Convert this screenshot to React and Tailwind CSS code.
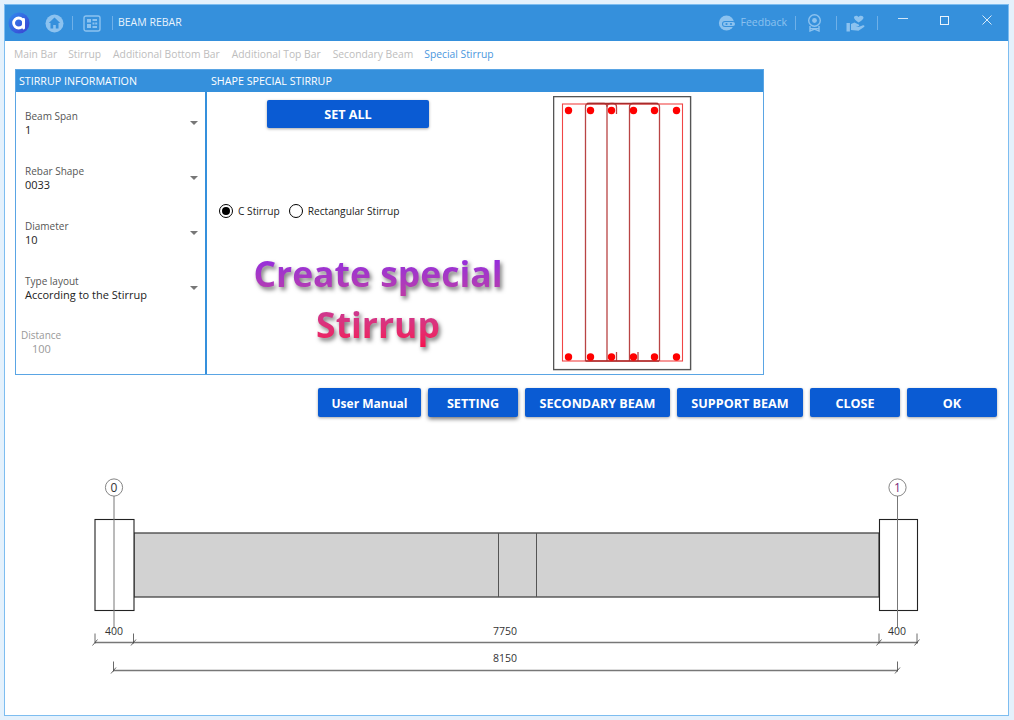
import React from "react";

const font = { fontFamily: '"Open Sans", "Noto Sans", sans-serif' };

function Sep() {
  return <div className="w-px h-[14px] bg-[#6fb0e8]" />;
}

function Logo() {
  return (
    <svg width="22" height="22" viewBox="0 0 22 22">
      <defs>
        <linearGradient id="lg" x1="0" y1="0" x2="1" y2="1">
          <stop offset="0" stopColor="#2f8cf0" />
          <stop offset="1" stopColor="#3b3fd0" />
        </linearGradient>
      </defs>
      <circle cx="11" cy="11" r="10.5" fill="url(#lg)" />
      <circle cx="10.6" cy="11" r="5" fill="none" stroke="#fff" strokeWidth="2.8" />
      <path d="M15.6 7.5 V16" stroke="#fff" strokeWidth="2.8" fill="none" strokeLinecap="round" />
    </svg>
  );
}

function HomeIcon() {
  return (
    <svg width="19" height="19" viewBox="0 0 19 19">
      <circle cx="9.5" cy="9.5" r="9" fill="#8cc2ef" />
      <path d="M9.5 3.6 L15.2 9 H13.5 V14.6 H10.8 V11 H8.2 V14.6 H5.5 V9 H3.8 Z" fill="#3590dc" />
    </svg>
  );
}

function PanelIcon() {
  return (
    <svg width="18" height="17" viewBox="0 0 18 17" fill="none">
      <rect x="1" y="1" width="16" height="15" rx="2" stroke="#8cc2ef" strokeWidth="1.4" />
      <rect x="4" y="4" width="4" height="3.5" fill="#8cc2ef" />
      <rect x="4" y="9" width="4" height="4" fill="#8cc2ef" />
      <rect x="9.5" y="4" width="4.5" height="2" fill="#8cc2ef" />
      <rect x="9.5" y="7.5" width="2" height="2" fill="#8cc2ef" />
      <rect x="12.2" y="7.5" width="2" height="2" fill="#8cc2ef" />
      <rect x="9.5" y="11" width="4.5" height="2" fill="#8cc2ef" />
    </svg>
  );
}

function FeedbackIcon() {
  return (
    <svg width="18" height="16" viewBox="0 0 18 16">
      <circle cx="8.5" cy="8" r="7.6" fill="#8cc2ef" />
      <rect x="4" y="6" width="13.5" height="6" rx="3" fill="#3590dc" />
      <rect x="5" y="7" width="12" height="4" rx="2" fill="#8cc2ef" />
      <circle cx="8.5" cy="9" r="1.1" fill="#3590dc" />
      <circle cx="13" cy="9" r="1.1" fill="#3590dc" />
    </svg>
  );
}

function AwardIcon() {
  return (
    <svg width="15" height="18" viewBox="0 0 15 18" fill="none" stroke="#8cc2ef">
      <circle cx="7.5" cy="6.5" r="5.8" strokeWidth="1.4" />
      <circle cx="7.5" cy="6.5" r="2.4" fill="#8cc2ef" stroke="none" />
      <path d="M3 12 V17 L7.5 15 L12 17 V12" strokeWidth="1.4" />
      <path d="M3 14.5 H12" strokeWidth="1" />
    </svg>
  );
}

function HandHeartIcon() {
  return (
    <svg width="19" height="17" viewBox="0 0 19 17" fill="#8cc2ef">
      <path d="M12.5 7.6 C9.5 5.4 8 4 8 2.6 C8 0.6 11 0 12.5 2 C14 0 17.5 0.6 17.5 2.8 C17.5 4.2 15.6 5.6 12.5 7.6 Z" />
      <rect x="0.5" y="8" width="3.4" height="8.5" />
      <path d="M5 9 L8.5 7.6 L12.6 9.4 C13.8 10 13.2 11.4 12 11.2 L9.5 10.8 L12.5 11.9 L17 10.2 C18.4 9.9 19 11.2 18 12 L12.5 15.8 L5 15 Z" />
    </svg>
  );
}

function Field({ label, value }) {
  return (
    <div className="relative pl-[9px] h-[55px]">
      <div className="text-[10px] leading-[14px] text-[#555]">{label}</div>
      <div className="text-[11px] leading-[14px] text-[#222]">{value}</div>
      <div className="absolute right-[7px] top-[12px] w-0 h-0 border-l-[4px] border-r-[4px] border-t-[4px] border-l-transparent border-r-transparent border-t-[#777]" />
    </div>
  );
}

function Radio({ checked, label }) {
  return (
    <label className="flex items-center gap-[5px]">
      <span className="w-[14px] h-[14px] rounded-full border-[1.6px] border-black flex items-center justify-center bg-white">
        {checked && <span className="w-[8px] h-[8px] rounded-full bg-black" />}
      </span>
      <span className="text-[10.2px] leading-[14px] text-[#222]">{label}</span>
    </label>
  );
}

function Btn({ w, children, raised, size = "text-[12.6px] pt-[3px]" }) {
  return (
    <button
      className={
        "h-[29px] rounded-[2px] bg-[#0a5bd3] text-white font-bold flex items-center justify-center " +
        size +
        (raised ? " shadow-[0_2px_4px_rgba(0,0,0,0.55)] " : " shadow-[0_1px_3px_rgba(0,0,0,0.35)] ") +
        w
      }
    >
      {children}
    </button>
  );
}

function StirrupDrawing() {
  const dots = [15.5, 37.5, 58.5, 80.5, 101.5, 123.5];
  return (
    <svg width="139" height="275" viewBox="0 0 139 275" className="block">
      <rect x="0.6" y="0.6" width="137" height="273" fill="#fff" stroke="#555" strokeWidth="1.4" />
      <rect x="9.5" y="8" width="120" height="257" fill="none" stroke="#f04545" strokeWidth="1.1" />
      <g fill="none" stroke="#b94444" strokeWidth="1.3">
        <path d="M32.5 265 V11 Q32.5 7.5 36 7.5 H51 Q54 7.5 54 11 V265" />
        <path d="M54 11 Q54 7.5 58 7.5 H60 Q63.5 7.5 63.5 11 V18" />
        <path d="M76.5 265 V11 Q76.5 7.5 80 7.5 H103 Q106.5 7.5 106.5 11 V265" />
        <path d="M63.5 256 V265" />
        <path d="M85 256 V265" />
      </g>
      <path d="M34 7.5 H105 M32.5 265 H106" stroke="#a82a2a" strokeWidth="1.4" fill="none" />
      {dots.map((x) => (
        <g key={x} fill="#ff0000">
          <circle cx={x} cy="14.5" r="3.7" />
          <circle cx={x} cy="261" r="3.7" />
        </g>
      ))}
    </svg>
  );
}

function Tick({ x, y, h = 12 }) {
  return <path d={`M${x} ${y - h + 3} V${y + 1} M${x - 2.5} ${y + 3} L${x + 2.5} ${y - 3}`} stroke="#444" strokeWidth="0.8" fill="none" />;
}

function BeamDiagram() {
  return (
    <svg width="1004" height="215" viewBox="0 0 1004 215" className="block" style={font}>
      <g transform="translate(-5,-470)">
        <rect x="134" y="533" width="745" height="64" fill="#d2d2d2" stroke="#444" strokeWidth="1.3" />
        <path d="M498.5 533 V597 M536.5 533 V597" stroke="#555" strokeWidth="1" />
        <rect x="95" y="519.5" width="39" height="91" fill="#fff" stroke="#222" strokeWidth="1.1" />
        <rect x="879.5" y="519.5" width="38" height="91" fill="#fff" stroke="#222" strokeWidth="1.1" />
        <path d="M114 496 V627 M897.5 496 V627" stroke="#777" strokeWidth="1" />
        <circle cx="114" cy="487.5" r="8.6" fill="#fff" stroke="#777" strokeWidth="0.9" />
        <circle cx="897.5" cy="487.5" r="8.6" fill="#fff" stroke="#777" strokeWidth="0.9" />
        <text x="114" y="492" fontSize="12" textAnchor="middle" fill="#333">0</text>
        <text x="897.5" y="492" fontSize="12" textAnchor="middle" fill="#7a1f7a">1</text>
        <path d="M95 642.5 H918" stroke="#777" strokeWidth="1.4" />
        <path d="M113.5 670.5 H897.5" stroke="#777" strokeWidth="1.4" />
        <Tick x={95} y={642.5} />
        <Tick x={133.5} y={642.5} />
        <Tick x={879} y={642.5} />
        <Tick x={917} y={642.5} />
        <Tick x={113.5} y={670.5} />
        <Tick x={897.5} y={670.5} />
        <g fontSize="10.5" textAnchor="middle" fill="#333">
          <text x="114" y="635">400</text>
          <text x="505" y="635">7750</text>
          <text x="897" y="635">400</text>
          <text x="505" y="662">8150</text>
        </g>
      </g>
    </svg>
  );
}

export default function App() {
  return (
    <div className="w-[1014px] h-[720px] bg-[#e4f1fc] p-[4px] pr-[5px] overflow-hidden" style={font}>
      <div className="w-[1005px] h-[712px] border border-[#7dbdf0] bg-white flex flex-col">
        <header className="h-[36px] bg-[#3590dc] flex items-center pl-[3px] shrink-0">
          <Logo />
          <div className="ml-[15px]"><HomeIcon /></div>
          <div className="ml-[8px]"><Sep /></div>
          <div className="ml-[10px]"><PanelIcon /></div>
          <div className="ml-[11px]"><Sep /></div>
          <div className="ml-[5px] text-[10.5px] text-[#e8f3fc]">BEAM REBAR</div>
          <div className="ml-auto flex items-center">
            <FeedbackIcon />
            <span className="ml-[5px] text-[10.5px] text-[#8cc2ef]">Feedback</span>
            <div className="ml-[8px]"><Sep /></div>
            <div className="ml-[11px]"><AwardIcon /></div>
            <div className="ml-[14px]"><Sep /></div>
            <div className="ml-[9px]"><HandHeartIcon /></div>
            <div className="ml-[12px]"><Sep /></div>
            <div className="ml-[20px] w-[10px] h-px bg-[#d3e7f8] -translate-y-[5px]" />
            <div className="ml-[32px] w-[9px] h-[9px] border border-[#eaf4fc] -translate-y-[3px]" />
            <svg className="ml-[33px] mr-[16px] -translate-y-[3px]" width="10" height="10" viewBox="0 0 10 10">
              <path d="M0.5 0.5 L9.5 9.5 M9.5 0.5 L0.5 9.5" stroke="#eaf4fc" strokeWidth="0.9" />
            </svg>
          </div>
        </header>

        <nav className="h-[28px] flex items-center pl-[9px] gap-[12px] text-[10.3px] text-[#bdbdbd] shrink-0">
          <span>Main Bar</span>
          <span className="-ml-px">Stirrup</span>
          <span>Additional Bottom Bar</span>
          <span>Additional Top Bar</span>
          <span>Secondary Beam</span>
          <span className="-ml-px text-[#4a97de]">Special Stirrup</span>
        </nav>

        <section className="ml-[10px] w-[749px] h-[306px] border border-[#5aa5e4] flex flex-col shrink-0">
          <div className="h-[22px] bg-[#3590dc] flex text-[10.7px] text-white items-center shrink-0 pt-px">
            <div className="w-[192px] pl-[3px]">STIRRUP INFORMATION</div>
            <div className="pl-[3px]">SHAPE SPECIAL STIRRUP</div>
          </div>
          <div className="flex flex-1">
            <div className="w-[191px] border-r-2 border-[#3590dc] pt-[17px] shrink-0">
              <Field label="Beam Span" value="1" />
              <Field label="Rebar Shape" value="0033" />
              <Field label="Diameter" value="10" />
              <Field label="Type layout" value="According to the Stirrup" />
              <div className="pl-[5px] -mt-px text-[#999]">
                <div className="text-[10px] leading-[14px]">Distance</div>
                <div className="text-[11px] leading-[14px] pl-[11px]">100</div>
              </div>
            </div>
            <div className="flex-1 flex pl-[12px]">
              <div className="w-[283px]">
                <button className="ml-[48px] mt-[8px] w-[162px] h-[28px] rounded-[2px] bg-[#0a5bd3] text-white text-[12.6px] font-bold block pt-[2px] shadow-[0_1px_3px_rgba(0,0,0,0.35)]">
                  SET ALL
                </button>
                <div className="mt-[76px] flex gap-[9px]">
                  <Radio checked label="C Stirrup" />
                  <Radio label="Rectangular Stirrup" />
                </div>
                <div className="mt-[30px] ml-[-1px] w-[320px] text-center text-[35.5px] leading-[51px] font-bold bg-gradient-to-b from-[#8a1cec] to-[#fa0048] bg-clip-text text-transparent [filter:drop-shadow(2px_3px_2px_rgba(0,0,0,0.5))]">
                  Create special
                  <br />
                  Stirrup
                </div>
              </div>
              <div className="ml-[51px] mt-[4px]">
                <StirrupDrawing />
              </div>
            </div>
          </div>
        </section>

        <div className="mt-[13px] ml-[313px] flex gap-[7px] shrink-0">
          <Btn w="w-[103px]" size="text-[12px] pt-[2px]">User Manual</Btn>
          <Btn w="w-[90px]" raised>SETTING</Btn>
          <Btn w="w-[145px]">SECONDARY BEAM</Btn>
          <Btn w="w-[126px]">SUPPORT BEAM</Btn>
          <Btn w="w-[90px]">CLOSE</Btn>
          <Btn w="w-[90px]">OK</Btn>
        </div>

        <div className="mt-[53px] shrink-0">
          <BeamDiagram />
        </div>
      </div>
    </div>
  );
}
